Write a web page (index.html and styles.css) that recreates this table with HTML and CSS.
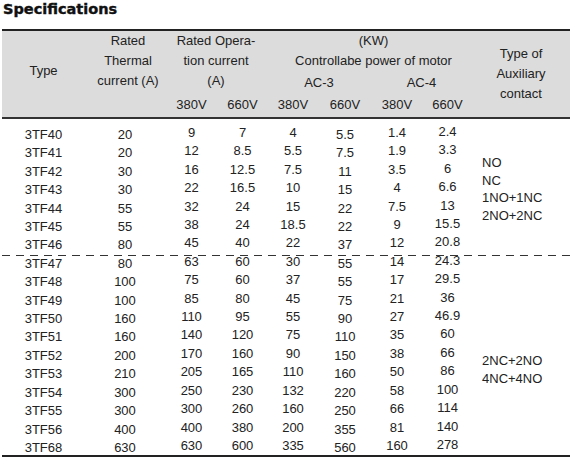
FILE: index.html
```html
<!DOCTYPE html>
<html lang="en">
<head>
  <meta charset="UTF-8">
  <meta name="viewport" content="width=device-width, initial-scale=1.0">
  <title>Specifications</title>
  <link rel="stylesheet" href="styles.css">
</head>
<body>
  <h1 class="title">Specifications</h1>
  <table class="spec">
    <colgroup>
      <col class="c-type">
      <col class="c-therm">
      <col class="c-op380">
      <col class="c-op660">
      <col class="c-v">
      <col class="c-v">
      <col class="c-v">
      <col class="c-last">
      <col class="c-aux">
    </colgroup>
    <thead>
      <tr>
        <th rowspan="3" class="h-type">Type</th>
        <th rowspan="3" class="h-therm">Rated<br>Thermal<br>current (A)</th>
        <th rowspan="2" colspan="2" class="h-op">Rated Opera-<br>tion current<br>(A)</th>
        <th colspan="4" class="h-kw">(KW)<br>Controllabe power of motor</th>
        <th rowspan="3" class="h-aux">Type of<br>Auxiliary<br>contact</th>
      </tr>
      <tr class="h-ac">
        <th colspan="2">AC-3</th>
        <th colspan="2">AC-4</th>
      </tr>
      <tr class="h-volts">
        <th>380V</th><th>660V</th>
        <th>380V</th><th>660V</th>
        <th>380V</th><th>660V</th>
      </tr>
    </thead>
    <tbody>
      <tr class="first">
        <td>3TF40</td><td>20</td><td>9</td><td>7</td><td>4</td><td>5.5</td><td>1.4</td><td>2.4</td>
        <td rowspan="7" class="aux aux-top">NO<br>NC<br>1NO+1NC<br>2NO+2NC</td>
      </tr>
      <tr><td>3TF41</td><td>20</td><td>12</td><td>8.5</td><td>5.5</td><td>7.5</td><td>1.9</td><td>3.3</td></tr>
      <tr><td>3TF42</td><td>30</td><td>16</td><td>12.5</td><td>7.5</td><td>11</td><td>3.5</td><td>6</td></tr>
      <tr><td>3TF43</td><td>30</td><td>22</td><td>16.5</td><td>10</td><td>15</td><td>4</td><td>6.6</td></tr>
      <tr><td>3TF44</td><td>55</td><td>32</td><td>24</td><td>15</td><td>22</td><td>7.5</td><td>13</td></tr>
      <tr><td>3TF45</td><td>55</td><td>38</td><td>24</td><td>18.5</td><td>22</td><td>9</td><td>15.5</td></tr>
      <tr><td>3TF46</td><td>80</td><td>45</td><td>40</td><td>22</td><td>37</td><td>12</td><td>20.8</td></tr>
      <tr class="split">
        <td>3TF47</td><td>80</td><td>63</td><td>60</td><td>30</td><td>55</td><td>14</td><td>24.3</td>
        <td rowspan="11" class="aux aux-bottom">2NC+2NO<br>4NC+4NO</td>
      </tr>
      <tr><td>3TF48</td><td>100</td><td>75</td><td>60</td><td>37</td><td>55</td><td>17</td><td>29.5</td></tr>
      <tr><td>3TF49</td><td>100</td><td>85</td><td>80</td><td>45</td><td>75</td><td>21</td><td>36</td></tr>
      <tr><td>3TF50</td><td>160</td><td>110</td><td>95</td><td>55</td><td>90</td><td>27</td><td>46.9</td></tr>
      <tr><td>3TF51</td><td>160</td><td>140</td><td>120</td><td>75</td><td>110</td><td>35</td><td>60</td></tr>
      <tr><td>3TF52</td><td>200</td><td>170</td><td>160</td><td>90</td><td>150</td><td>38</td><td>66</td></tr>
      <tr><td>3TF53</td><td>210</td><td>205</td><td>165</td><td>110</td><td>160</td><td>50</td><td>86</td></tr>
      <tr><td>3TF54</td><td>300</td><td>250</td><td>230</td><td>132</td><td>220</td><td>58</td><td>100</td></tr>
      <tr><td>3TF55</td><td>300</td><td>300</td><td>260</td><td>160</td><td>250</td><td>66</td><td>114</td></tr>
      <tr><td>3TF56</td><td>400</td><td>400</td><td>380</td><td>200</td><td>355</td><td>81</td><td>140</td></tr>
      <tr><td>3TF68</td><td>630</td><td>630</td><td>600</td><td>335</td><td>560</td><td>160</td><td>278</td></tr>
    </tbody>
  </table>
</body>
</html>
```

FILE: styles.css
```css
body {
  margin: 0;
  font-family: "Liberation Sans", Arial, sans-serif;
  color: #222;
  background: #fff;
}
.title {
  margin: 0 0 11px 3px;
  font-family: "DejaVu Sans", sans-serif;
  font-weight: bold;
  font-size: 14.5px;
  line-height: 18px;
  color: #111;
  -webkit-text-stroke: 0.4px #111;
}
.spec {
  margin-left: 2px;
  width: 568px;
  border-collapse: collapse;
  table-layout: fixed;
  font-size: 13px;
  border-top: 2px solid #222;
  border-bottom: 2px solid #222;
}
.c-type { width: 83px; }
.c-therm { width: 80px; }
.c-op380 { width: 53px; }
.c-op660 { width: 49px; }
.c-v { width: 52px; }
.c-last { width: 49px; }
.c-aux { width: 98px; }

.spec thead {
  background: #dcdcdc;
  border-bottom: 2px solid #333;
}
.spec th {
  font-weight: normal;
  padding: 0;
  line-height: 20px;
  vertical-align: top;
  text-align: center;
}
.spec th.h-type {
  vertical-align: middle;
  padding-bottom: 6px;
}
.spec th.h-therm {
  padding-left: 6px;
}
.spec th.h-kw {
  padding-left: 8px;
}
.h-ac th {
  padding-top: 2px;
}
.spec .h-volts th {
  vertical-align: middle;
  line-height: 24px;
}
.spec th.h-aux {
  vertical-align: middle;
}

.spec td {
  text-align: center;
  padding: 2px 0;
  line-height: 14.4px;
}
.spec tbody td:nth-child(1),
.spec tbody td:nth-child(2),
.spec tbody td:nth-child(6) {
  padding: 4px 0 0;
}
.spec tbody td:nth-child(8) {
  padding: 1px 0 3px;
}
.spec tbody tr.first td {
  padding-top: 7px;
}
.spec tbody tr.first td:nth-child(1),
.spec tbody tr.first td:nth-child(2),
.spec tbody tr.first td:nth-child(6) {
  padding-top: 9px;
}
.spec tbody tr.first td:nth-child(8) {
  padding-top: 6px;
}
.split {
  background: linear-gradient(90deg, #333 8px, transparent 8px) 0 2px / 14px 1px repeat-x;
}
.spec td.aux {
  text-align: left;
  padding: 0 0 0 10px;
}
.spec td.aux-top {
  vertical-align: middle;
  line-height: 17.5px;
}
.spec td.aux-bottom {
  vertical-align: top;
  line-height: 18.5px;
  padding-top: 99px;
}
```
